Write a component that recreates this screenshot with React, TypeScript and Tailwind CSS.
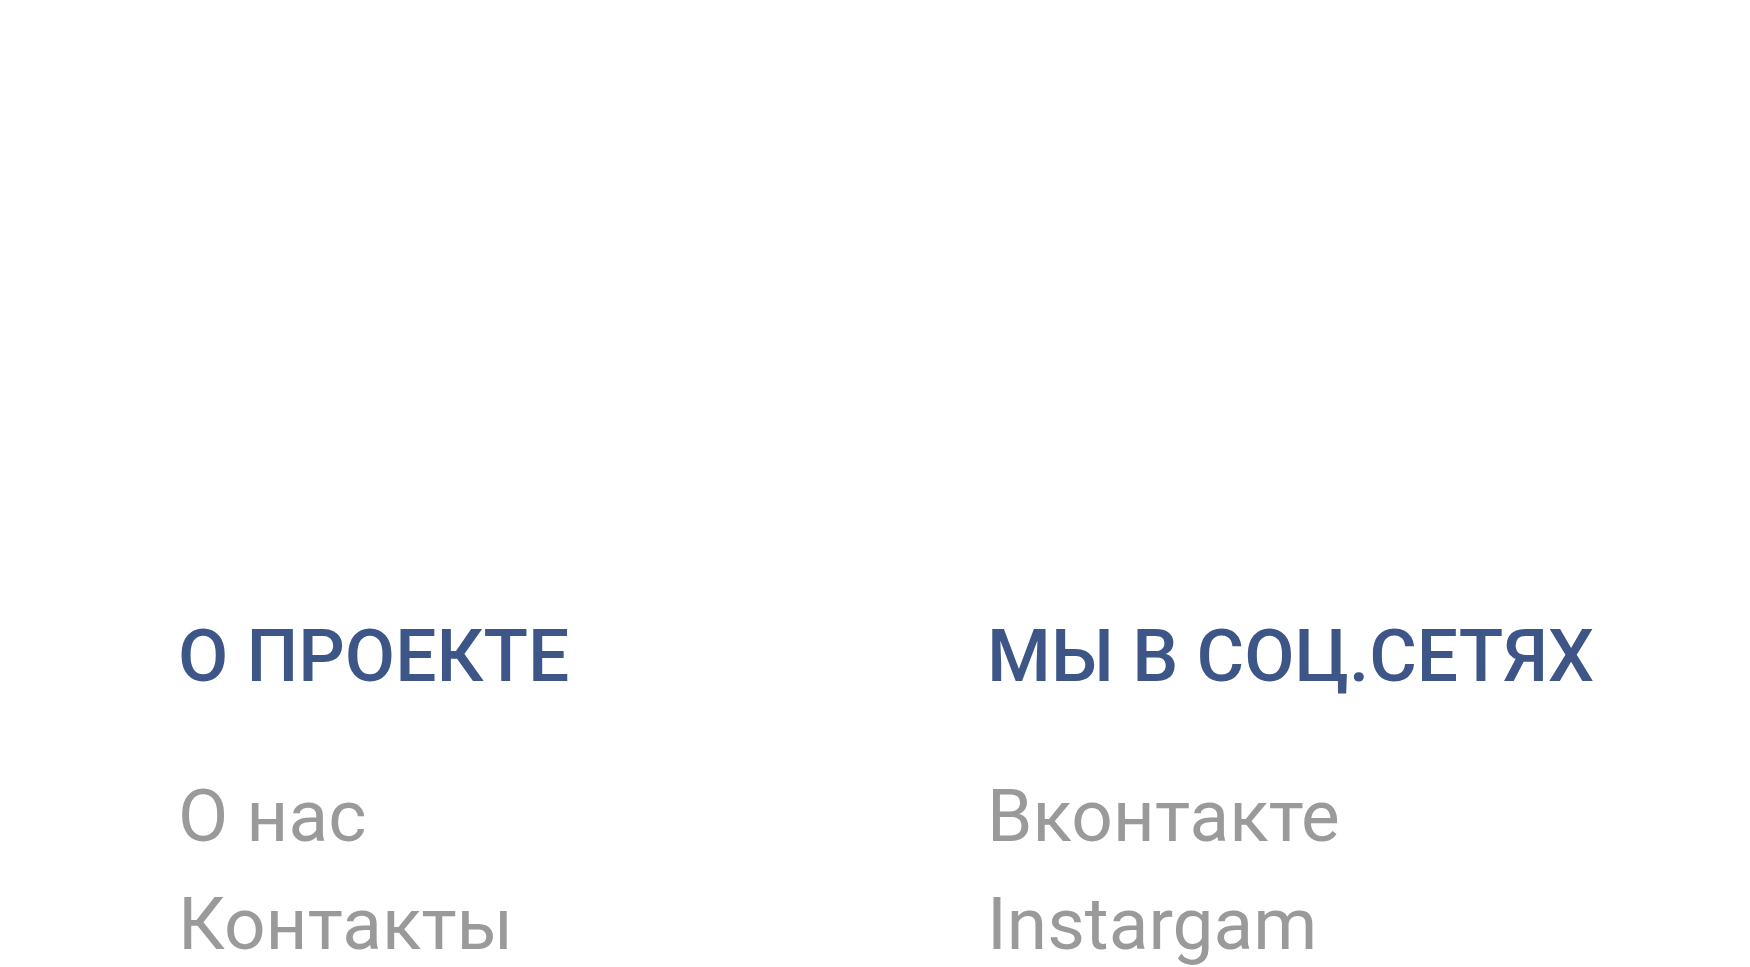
const columns = [
	{ title: "О ПРОЕКТЕ", links: ["О нас", "Контакты"] },
	{ title: "МЫ В СОЦ.СЕТЯХ", links: ["Вконтакте", "Instargam"] },
];

export default function App() {
	return (
		<div className="h-[967px] w-full overflow-hidden bg-white font-['Roboto',sans-serif]">
			<footer className="grid grid-cols-[809px_1fr] pl-[178px] pt-[620px]">
				{columns.map((col) => (
					<div key={col.title} className="flex flex-col">
						<h3 className="text-[73px] font-medium leading-none whitespace-nowrap text-[#3d5687]">
							{col.title}
						</h3>
						<ul className="mt-[69px] flex flex-col">
							{col.links.map((link) => (
								<li key={link}>
									<a
										href="#"
										className="text-[73px] leading-[108px] whitespace-nowrap text-[#9a9a9a]"
									>
										{link}
									</a>
								</li>
							))}
						</ul>
					</div>
				))}
			</footer>
		</div>
	);
}
